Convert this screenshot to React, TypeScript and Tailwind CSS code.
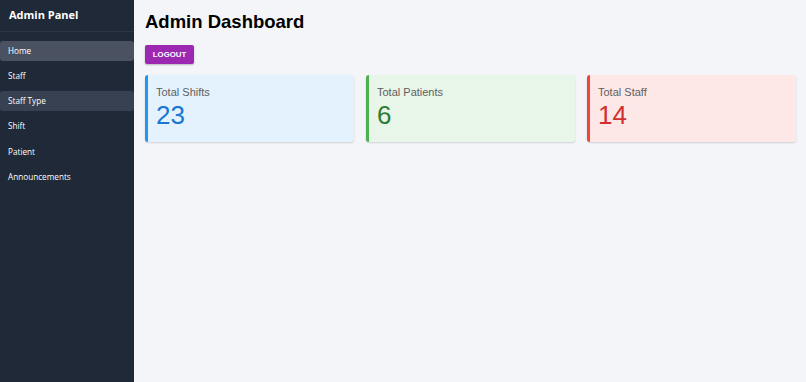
import React from 'react';

const navItems = [
  { label: 'Home', active: true },
  { label: 'Staff' },
  { label: 'Staff Type', hover: true },
  { label: 'Shift' },
  { label: 'Patient' },
  { label: 'Announcements' },
];

const stats = [
  {
    label: 'Total Shifts',
    value: 23,
    card: 'bg-[#e3f2fd] border-[#2196f3]',
    text: 'text-[#1976d2]',
  },
  {
    label: 'Total Patients',
    value: 6,
    card: 'bg-[#e8f5e9] border-[#4caf50]',
    text: 'text-[#2e7d32]',
  },
  {
    label: 'Total Staff',
    value: 14,
    card: 'bg-[#fde8e7] border-[#f44336]',
    text: 'text-[#d32f2f]',
  },
];

export default function App() {
  return (
    <div className="flex h-[382px] w-[806px] overflow-hidden font-['Liberation_Sans',Arial,sans-serif]">
      <aside className="flex w-[134px] shrink-0 flex-col bg-[#1f2937] font-['Open_Sans','Noto_Sans',sans-serif] text-white">
        <div className="flex h-[32px] items-center border-b border-[#2c3644] px-[9px] text-[11px] font-bold">
          Admin Panel
        </div>
        <nav className="flex flex-col gap-[5.2px] pt-[9px]">
          {navItems.map((item) => (
            <div
              key={item.label}
              className={
                'flex h-[20px] items-center rounded-[3px] px-[8px] text-[8.2px] ' +
                (item.active ? 'bg-[#4a5261]' : item.hover ? 'bg-[#374151]' : '')
              }
            >
              {item.label}
            </div>
          ))}
        </nav>
      </aside>

      <main className="flex-1 bg-[#f4f5f9] pl-[11px] pr-[10px] pt-[10px]">
        <h1 className="text-[18.5px] font-bold leading-[23px] text-black">Admin Dashboard</h1>
        <button className="mt-[12px] flex h-[19px] w-[49px] items-center justify-center rounded-[2px] bg-[#9c27b0] text-[7.8px] font-bold text-white shadow-[0_1px_2px_rgba(0,0,0,0.25)]">
          LOGOUT
        </button>
        <div className="mt-[11px] grid grid-cols-3 gap-[12px]">
          {stats.map((s) => (
            <div
              key={s.label}
              className={
                'flex h-[67px] flex-col rounded-[3px] border-l-[3px] px-[8px] pt-[10px] shadow-[0_1px_2px_rgba(0,0,0,0.15)] ' +
                s.card
              }
            >
              <div className="text-[11px] leading-[14px] text-[#5f5f5f]">{s.label}</div>
              <div className={'mt-[1px] text-[26px] leading-[30px] ' + s.text}>{s.value}</div>
            </div>
          ))}
        </div>
      </main>
    </div>
  );
}
